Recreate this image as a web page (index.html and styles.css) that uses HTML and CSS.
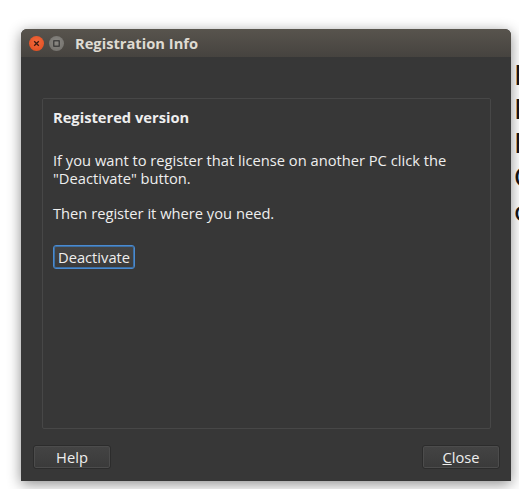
FILE: index.html
```html
<!DOCTYPE html>
<html>
<head>
<meta charset="utf-8">
<link rel="stylesheet" href="styles.css">
</head>
<body>
<div class="desktop">
  <div class="bgtext">
    <div>E</div><div>E</div><div>F</div><div>C</div><div>c</div>
  </div>
  <div class="window">
    <div class="titlebar">
      <span class="wbtn close"><svg width="15" height="15" viewBox="0 0 15 15"><path d="M5.2 5.2 L9.8 9.8 M9.8 5.2 L5.2 9.8" stroke="#3a1a10" stroke-width="1.3"/></svg></span>
      <span class="wbtn max"><svg width="15" height="15" viewBox="0 0 15 15"><rect x="4.8" y="4.8" width="5.4" height="5.4" fill="none" stroke="#2e2e2e" stroke-width="1.1"/></svg></span>
      <span class="title">Registration Info</span>
    </div>
    <div class="body">
      <div class="group">
        <div class="heading">Registered version</div>
        <p class="msg">If you want to register that license on another PC click the<br>"Deactivate" button.</p>
        <p class="msg">Then register it where you need.</p>
        <div><button class="btn focus">Deactivate</button></div>
      </div>
      <div class="footer">
        <button class="btn wide">Help</button>
        <button class="btn wide"><u>C</u>lose</button>
      </div>
    </div>
  </div>
</div>
</body>
</html>
```

FILE: styles.css
```css
html, body {
  margin: 0;
  padding: 0;
  background: #ffffff;
  width: 519px;
  height: 489px;
  overflow: hidden;
}
.desktop {
  position: relative;
  width: 519px;
  height: 489px;
  font-family: "Open Sans", "DejaVu Sans", sans-serif;
}
.bgtext {
  position: absolute;
  left: 514px;
  top: 59px;
  font-family: "DejaVu Sans", sans-serif;
  font-size: 27px;
  line-height: 34px;
  color: #151515;
}
.window {
  position: absolute;
  left: 21px;
  top: 29px;
  width: 490px;
  height: 452px;
  background: #373737;
  border-radius: 6px 6px 0 0;
  box-shadow: 0 3px 14px rgba(0, 0, 0, 0.45);
  display: flex;
  flex-direction: column;
  overflow: hidden;
}
.titlebar {
  height: 28px;
  flex: none;
  background: linear-gradient(#58544d, #46433f);
  display: flex;
  align-items: center;
  padding-left: 8px;
  gap: 5px;
}
.wbtn {
  width: 15px;
  height: 15px;
  border-radius: 50%;
  display: flex;
}
.wbtn.close {
  background: radial-gradient(circle at 50% 40%, #f26a3e, #df4a1b);
}
.wbtn.max {
  background: radial-gradient(circle at 50% 40%, #8a8883, #6f6d69);
}
.title {
  margin-left: 6px;
  color: #dfdbd2;
  font-family: "Open Sans", sans-serif;
  font-weight: 700;
  font-size: 14.7px;
}
.body {
  flex: 1;
  display: flex;
  flex-direction: column;
  padding: 41px 20px 12px 21px;
}
.group {
  flex: 1;
  border: 1px solid #474747;
  border-radius: 2px;
  padding: 10px 10px;
  color: #eeeeee;
  font-size: 14.7px;
}
.heading {
  font-weight: 700;
  line-height: 17px;
}
.msg {
  margin: 25px 0 0;
  line-height: 18px;
}
.msg + .msg {
  margin-top: 17px;
}
.btn {
  font-family: "Open Sans", sans-serif;
  font-size: 14.7px;
  color: #eeeeee;
  background: linear-gradient(#444444, #3a3a3a);
  border: 1px solid #2c2c2c;
  border-radius: 3px;
  box-shadow: inset 0 0 0 1px #4c4c4c;
  padding: 0 4px;
  height: 24px;
  line-height: 20px;
}
.btn.focus {
  margin-top: 23px;
  border-color: #4a8ad0;
  box-shadow: inset 0 0 0 1px #3d6fa3;
}
.footer {
  display: flex;
  justify-content: space-between;
  padding: 16px 0 0;
  margin: 0 -9px;
}
.btn.wide {
  width: 78px;
}
u {
  text-decoration-thickness: 1px;
}
```
